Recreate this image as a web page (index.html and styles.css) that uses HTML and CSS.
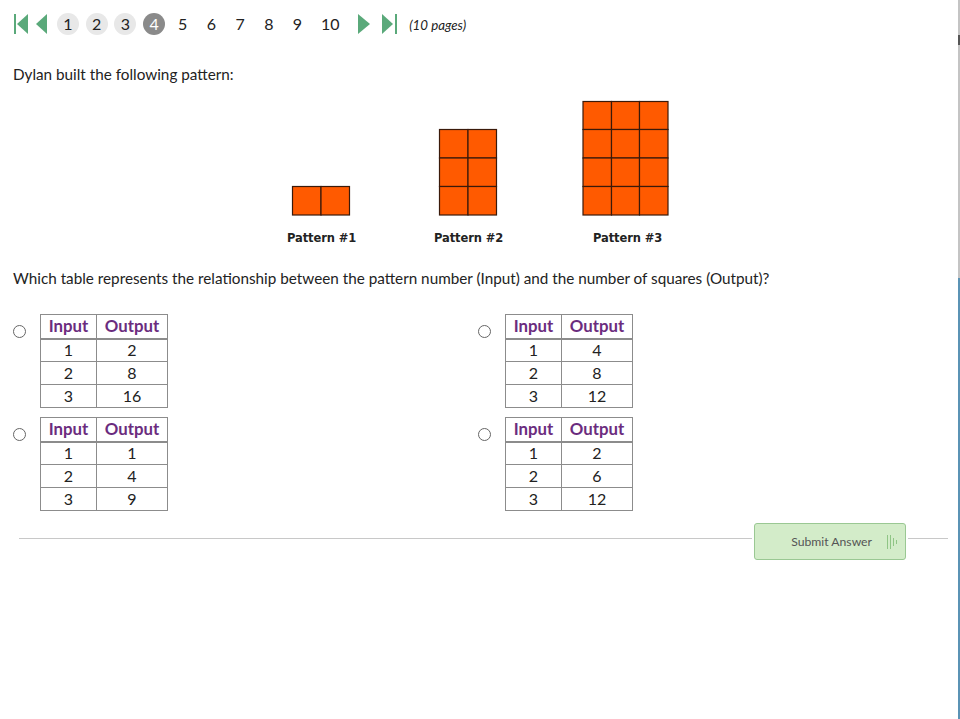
FILE: index.html
```html
<!DOCTYPE html>
<html lang="en">
<head>
<meta charset="utf-8">
<title>Question 4</title>
<link rel="stylesheet" href="styles.css">
</head>
<body>
<div class="page">
  <nav class="pager">
    <svg class="nav first" width="15" height="22" viewBox="0 0 15 22"><rect x="0" y="1" width="2" height="20" fill="#5aa97a"/><polygon points="14,1 14,21 3,11" fill="#5aa97a"/></svg>
    <svg class="nav prev" width="11" height="22" viewBox="0 0 11 22"><polygon points="11,1 11,21 0,11" fill="#5aa97a"/></svg>
    <ul class="pages">
      <li class="pg seen">1</li>
      <li class="pg seen">2</li>
      <li class="pg seen">3</li>
      <li class="pg current">4</li>
      <li class="pg">5</li>
      <li class="pg">6</li>
      <li class="pg">7</li>
      <li class="pg">8</li>
      <li class="pg">9</li>
      <li class="pg wide">10</li>
    </ul>
    <svg class="nav next" width="12" height="22" viewBox="0 0 12 22"><polygon points="0,1 0,21 12,11" fill="#5aa97a"/></svg>
    <svg class="nav last" width="15" height="22" viewBox="0 0 15 22"><polygon points="0,1 0,21 11,11" fill="#5aa97a"/><rect x="13" y="1" width="2" height="20" fill="#5aa97a"/></svg>
    <span class="count">(10 pages)</span>
  </nav>

  <p class="stem first-stem">Dylan built the following pattern:</p>

  <svg class="figure" width="400" height="155" viewBox="0 0 400 155">
    <g class="squares">
      <rect x="12.500" y="91.500" width="28.500" height="28.500"/><rect x="41" y="91.500" width="28.500" height="28.500"/>

      <rect x="159.500" y="34.500" width="28.500" height="28.500"/><rect x="188" y="34.500" width="28.500" height="28.500"/>
      <rect x="159.500" y="63" width="28.500" height="28.500"/><rect x="188" y="63" width="28.500" height="28.500"/>
      <rect x="159.500" y="91.500" width="28.500" height="28.500"/><rect x="188" y="91.500" width="28.500" height="28.500"/>

      <rect x="303" y="6.500" width="28.500" height="28"/><rect x="331.500" y="6.500" width="28" height="28"/><rect x="359.500" y="6.500" width="28.500" height="28"/>
      <rect x="303" y="34.500" width="28.500" height="28.500"/><rect x="331.500" y="34.500" width="28" height="28.500"/><rect x="359.500" y="34.500" width="28.500" height="28.500"/>
      <rect x="303" y="63" width="28.500" height="28.500"/><rect x="331.500" y="63" width="28" height="28.500"/><rect x="359.500" y="63" width="28.500" height="28.500"/>
      <rect x="303" y="91.500" width="28.500" height="28.500"/><rect x="331.500" y="91.500" width="28" height="28.500"/><rect x="359.500" y="91.500" width="28.500" height="28.500"/>
    </g>
    <text class="cap" x="7" y="147">Pattern #1</text>
    <text class="cap" x="154" y="147">Pattern #2</text>
    <text class="cap" x="313" y="147">Pattern #3</text>
  </svg>

  <p class="stem second-stem">Which table represents the relationship between the pattern number (Input) and the number of squares (Output)?</p>

  <div class="options">
    <label class="option">
      <span class="radio"></span>
      <table><tr><th class="c1">Input</th><th class="c2">Output</th></tr><tr><td>1</td><td>2</td></tr><tr><td>2</td><td>8</td></tr><tr><td>3</td><td>16</td></tr></table>
    </label>
    <label class="option">
      <span class="radio"></span>
      <table><tr><th class="c1">Input</th><th class="c2">Output</th></tr><tr><td>1</td><td>4</td></tr><tr><td>2</td><td>8</td></tr><tr><td>3</td><td>12</td></tr></table>
    </label>
    <label class="option">
      <span class="radio"></span>
      <table><tr><th class="c1">Input</th><th class="c2">Output</th></tr><tr><td>1</td><td>1</td></tr><tr><td>2</td><td>4</td></tr><tr><td>3</td><td>9</td></tr></table>
    </label>
    <label class="option">
      <span class="radio"></span>
      <table><tr><th class="c1">Input</th><th class="c2">Output</th></tr><tr><td>1</td><td>2</td></tr><tr><td>2</td><td>6</td></tr><tr><td>3</td><td>12</td></tr></table>
    </label>
  </div>

  <div class="submit-row">
    <span class="rule"></span>
    <button class="submit" type="button">
      <span>Submit Answer</span>
      <svg width="11" height="16" viewBox="0 0 11 16"><g stroke="#8fc585" stroke-width="1"><line x1="0.500" y1="1" x2="0.500" y2="15"/><line x1="3.500" y1="1" x2="3.500" y2="15"/><line x1="6.500" y1="4" x2="6.500" y2="12"/><line x1="9.500" y1="6" x2="9.500" y2="10"/></g></svg>
    </button>
    <span class="rule short"></span>
  </div>
</div>
<div class="edge"><span class="tick"></span></div>
</body>
</html>
```
FILE: styles.css
```css
* { box-sizing: border-box; }
html, body { margin: 0; height: 719px; overflow: hidden; background: #fff; }
body { font-family: Lato, "Open Sans", sans-serif; color: #222; font-size: 15.270px; }
.page { width: 958px; padding: 13px 0 0 13px; }

.pager { display: flex; align-items: center; height: 22px; }
.nav { flex: none; display: block; }
.first { margin-left: 1px; }
.prev { margin-left: 7px; }
.pages { display: flex; list-style: none; margin: 0 0 0 10px; padding: 0; }
.pg { width: 22px; height: 22px; margin-right: 6.700px; border-radius: 50%; text-align: center; line-height: 22px; font-size: 16px; color: #222; }
.seen { background: #e8e8e8; }
.current { background: #8a8a8a; color: #fff; }
.wide { width: 30px; margin-right: 0; }
.next { margin-left: 13px; }
.last { margin-left: 12px; }
.count { margin-left: 12px; padding-top: 2px; font-size: 13.300px; font-style: italic; color: #222; }

.stem { margin: 0; font-size: 15.270px; line-height: 20px; }
.first-stem { margin-top: 29px; }
.figure { display: block; margin: 11px 0 0 267px; }
.squares rect { fill: #ff5a00; stroke: #3a1a0a; stroke-width: 1.200; }
.cap { font-family: "DejaVu Sans", sans-serif; font-weight: 700; font-size: 11.500px; letter-spacing: -0.100px; fill: #222; }
.second-stem { margin-top: 18px; }

.options { display: grid; grid-template-columns: 465px 1fr; row-gap: 9px; margin-top: 26px; }
.option { display: flex; align-items: flex-start; }
.radio { flex: none; width: 13px; height: 13px; margin: 11px 14px 0 0; border: 1px solid #666; border-radius: 50%; background: #fff; }
table { border-collapse: collapse; text-align: center; table-layout: fixed; width: 128px; }
th, td { border: 1px solid #8c8c8c; padding: 0; height: 23px; font-size: 16px; font-weight: 400; color: #222; line-height: 20px; }
th { height: 24px; border-bottom-width: 2px; color: #6b2c7e; font-weight: 700; font-size: 16.800px; }
.c1 { width: 56px; }

.submit-row { display: flex; align-items: flex-start; margin-top: 12px; padding-left: 6px; width: 935px; }
.rule { flex: 1; height: 1px; margin-top: 15px; background: #c8c8c8; }
.short { flex: none; width: 40px; }
.submit { display: flex; align-items: center; justify-content: flex-end; gap: 15px; flex: none; width: 152px; height: 37px; margin: 0 2px; padding: 0 7px 0 0; background: #d3ecc9; border: 1px solid #9ac893; border-radius: 3px; font-family: Lato, sans-serif; font-size: 12.200px; color: #555; }

.edge { position: absolute; top: 0; right: 0; bottom: 0; width: 2px; background: #c4c4c4; }
.edge::after { content: ""; position: absolute; left: 0; top: 278px; bottom: 0; width: 2px; background: #5b93b5; }
.tick { position: absolute; left: 0; top: 35px; width: 2px; height: 10px; background: #555; }
```
